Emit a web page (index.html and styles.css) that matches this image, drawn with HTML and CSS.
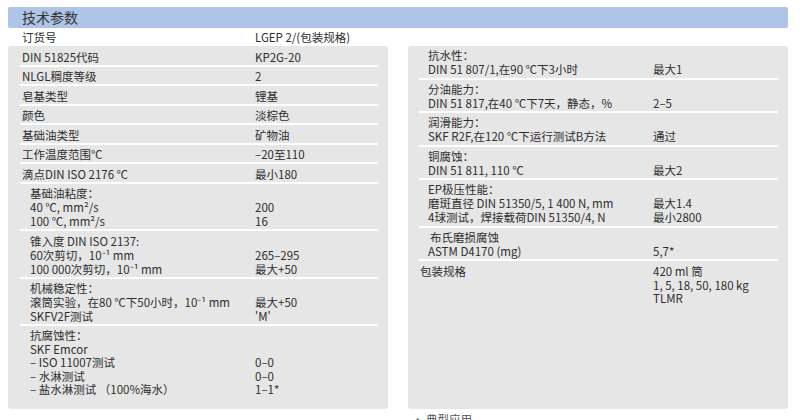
FILE: index.html
```html
<!DOCTYPE html>
<html lang="zh-CN">
<head>
<meta charset="utf-8">
<title>技术参数</title>
<link rel="stylesheet" href="styles.css">
</head>
<body>
<div class="sheet">
  <div class="head">技术参数</div>
  <div class="order">
    <div class="lbl">订货号</div>
    <div class="val">LGEP 2/(包装规格)</div>
  </div>
  <div class="panels">
    <div class="panel left">
      <div class="row"><div class="lbl">DIN 51825代码</div><div class="val">KP2G-20</div></div>
      <div class="row"><div class="lbl">NLGL稠度等级</div><div class="val">2</div></div>
      <div class="row"><div class="lbl">皂基类型</div><div class="val">锂基</div></div>
      <div class="row"><div class="lbl">颜色</div><div class="val">淡棕色</div></div>
      <div class="row"><div class="lbl">基础油类型</div><div class="val">矿物油</div></div>
      <div class="row"><div class="lbl">工作温度范围℃</div><div class="val">–20至110</div></div>
      <div class="row"><div class="lbl">滴点DIN ISO 2176 ℃</div><div class="val">最小180</div></div>
      <div class="row multi">
        <div class="lbl">基础油粘度：<br>40 ℃, mm²/s<br>100 ℃, mm²/s</div>
        <div class="val"><br>200<br>16</div>
      </div>
      <div class="row multi">
        <div class="lbl">锥入度 DIN ISO 2137:<br>60次剪切，10⁻¹ mm<br>100 000次剪切，10⁻¹ mm</div>
        <div class="val"><br>265–295<br>最大+50</div>
      </div>
      <div class="row multi">
        <div class="lbl">机械稳定性：<br>滚筒实验，在80 ℃下50小时，10⁻¹ mm<br>SKFV2F测试</div>
        <div class="val"><br>最大+50<br>'M'</div>
      </div>
      <div class="row multi last tight">
        <div class="lbl">抗腐蚀性：<br>SKF Emcor<br>– ISO 11007测试<br>–  水淋测试<br>–  盐水淋测试 （100%海水）</div>
        <div class="val"><br><br>0–0<br>0–0<br>1–1*</div>
      </div>
    </div>
    <div class="panel right">
      <div class="row multi">
        <div class="lbl">抗水性：<br>DIN 51 807/1,在90 ℃下3小时</div>
        <div class="val"><br>最大1</div>
      </div>
      <div class="row multi">
        <div class="lbl">分油能力：<br>DIN 51 817,在40 ℃下7天，静态，%</div>
        <div class="val"><br>2–5</div>
      </div>
      <div class="row multi">
        <div class="lbl">润滑能力：<br>SKF R2F,在120 ℃下运行测试B方法</div>
        <div class="val"><br>通过</div>
      </div>
      <div class="row multi">
        <div class="lbl">铜腐蚀：<br>DIN 51 811, 110 ℃</div>
        <div class="val"><br>最大2</div>
      </div>
      <div class="row multi">
        <div class="lbl">EP极压性能：<br>磨斑直径 DIN 51350/5, 1 400 N, mm<br>4球测试，焊接载荷DIN 51350/4, N</div>
        <div class="val"><br>最大1.4<br>最小2800</div>
      </div>
      <div class="row multi">
        <div class="lbl"><span class="ind">布氏磨损腐蚀</span><br>ASTM D4170 (mg)</div>
        <div class="val"><br>5,7*</div>
      </div>
      <div class="row last">
        <div class="lbl">包装规格</div>
        <div class="val">420 ml 筒<br>1, 5, 18, 50, 180 kg<br>TLMR</div>
      </div>
    </div>
  </div>
  <div class="after">• 典型应用</div>
</div>
</body>
</html>
```
FILE: styles.css
```css
* { box-sizing: border-box; }
html, body { background: #ffffff; }
body {
  margin: 7px 12px 0 8px;
  font-family: "Noto Sans CJK SC", sans-serif;
  font-size: 11.5px;
  line-height: 14px;
  color: #2e2e2e;
}
.head {
  height: 21px;
  background: #aec5e7;
  border-radius: 2px;
  padding-left: 14px;
  font-size: 14px;
  line-height: 21px;
  color: #333;
}
.order {
  display: grid;
  grid-template-columns: 233px 1fr;
  height: 18px;
  padding: 2px 0 0 14px;
}
.panels {
  display: grid;
  grid-template-columns: 380px 380px;
  column-gap: 20px;
}
.panel {
  background: #e6e6e6;
  border-radius: 3px;
  height: 363px;
  padding: 1px 10px 0 12px;
  overflow: hidden;
}
.panel.right { padding: 0 10px 0 11px; }
.row {
  display: grid;
  grid-template-columns: 235px 1fr;
  padding: 2.5px 0 1px;
  border-bottom: 2px solid #ffffff;
}
.panel.right .row { grid-template-columns: 234px 1fr; padding: 2px 0 1.5px; }
.row .lbl { padding-left: 2px; white-space: nowrap; }
.row.multi .lbl { padding-left: 10px; }
.panel.right .row .lbl { padding-left: 1px; }
.panel.right .row.multi .lbl { padding-left: 9px; }
.ind { padding-left: 2px; }
.row.last { border-bottom: none; }
.row.tight { line-height: 13.5px; padding-top: 3px; }
.panel.right .row.last { padding-top: 4px; line-height: 13.5px; }
.after {
  padding: 3px 0 0 404px;
  color: #555;
}
```
